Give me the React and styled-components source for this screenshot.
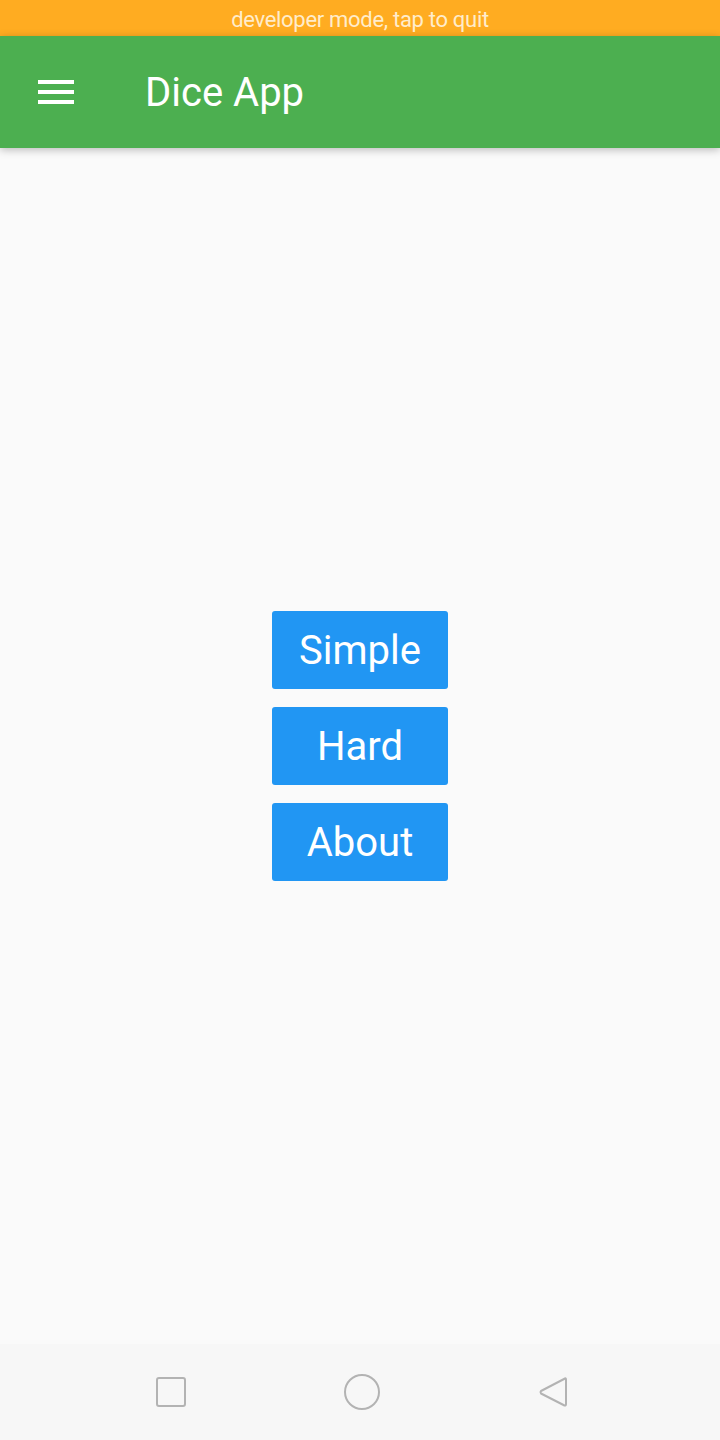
import React from 'react';
import styled, { createGlobalStyle } from 'styled-components';

const GlobalStyle = createGlobalStyle`
  html, body {
    margin: 0;
    padding: 0;
    background: #fafafa;
    font-family: Roboto, "Noto Sans", sans-serif;
  }
`;

const Screen = styled.div`
  width: 720px;
  height: 1440px;
  display: flex;
  flex-direction: column;
  background: #fafafa;
  overflow: hidden;
`;

const DevBanner = styled.div`
  height: 36px;
  flex: none;
  display: flex;
  align-items: center;
  justify-content: center;
  padding-top: 3px;
  box-sizing: border-box;
  background: #ffac21;
  color: #ffeccb;
  font-size: 22px;
  letter-spacing: -0.3px;
`;

const AppBar = styled.header`
  height: 112px;
  flex: none;
  display: flex;
  align-items: center;
  padding-left: 38px;
  background: #4caf50;
  box-shadow: 0 2px 8px rgba(0, 0, 0, 0.25);
  position: relative;
  z-index: 1;
`;

const MenuIcon = styled.div`
  width: 36px;
  height: 24px;
  display: flex;
  flex-direction: column;
  justify-content: space-between;
  margin-right: 71px;
`;

const MenuLine = styled.span`
  display: block;
  height: 4px;
  background: #fff;
`;

const Title = styled.h1`
  margin: 0;
  color: #fff;
  font-size: 40px;
  font-weight: 400;
`;

const Main = styled.main`
  flex: 1;
  display: flex;
  flex-direction: column;
  align-items: center;
  justify-content: center;
  gap: 18px;
`;

const MenuButton = styled.button`
  width: 176px;
  height: 78px;
  border: none;
  border-radius: 3px;
  background: #2196f3;
  color: #fff;
  font-family: Roboto, sans-serif;
  font-size: 40px;
  padding: 0;
`;

const NavBar = styled.nav`
  height: 96px;
  flex: none;
  display: flex;
  align-items: center;
  justify-content: space-between;
  padding: 0 150px 0 154px;
  background: #f7f7f7;
`;

const NavIcon = styled.svg`
  width: ${p => p.size || 34}px;
  height: ${p => p.size || 34}px;
  fill: none;
  stroke: #b3b3b3;
  stroke-width: 2;
  stroke-linejoin: round;
`;

export default function App() {
  return (
    <Screen>
      <GlobalStyle />
      <DevBanner>developer mode, tap to quit</DevBanner>
      <AppBar>
        <MenuIcon>
          <MenuLine />
          <MenuLine />
          <MenuLine />
        </MenuIcon>
        <Title>Dice App</Title>
      </AppBar>
      <Main>
        <MenuButton>Simple</MenuButton>
        <MenuButton>Hard</MenuButton>
        <MenuButton>About</MenuButton>
      </Main>
      <NavBar>
        <NavIcon viewBox="0 0 34 34">
          <rect x="3" y="3" width="28" height="28" rx="2" />
        </NavIcon>
        <NavIcon viewBox="0 0 38 38" size={38}>
          <circle cx="19" cy="19" r="17" />
        </NavIcon>
        <NavIcon viewBox="0 0 34 34">
          <path d="M29 3.5 Q30 3 30 5 L30 29 Q30 31 28.5 30.5 L5 18.5 Q4 17 5 16 Z" />
        </NavIcon>
      </NavBar>
    </Screen>
  );
}
